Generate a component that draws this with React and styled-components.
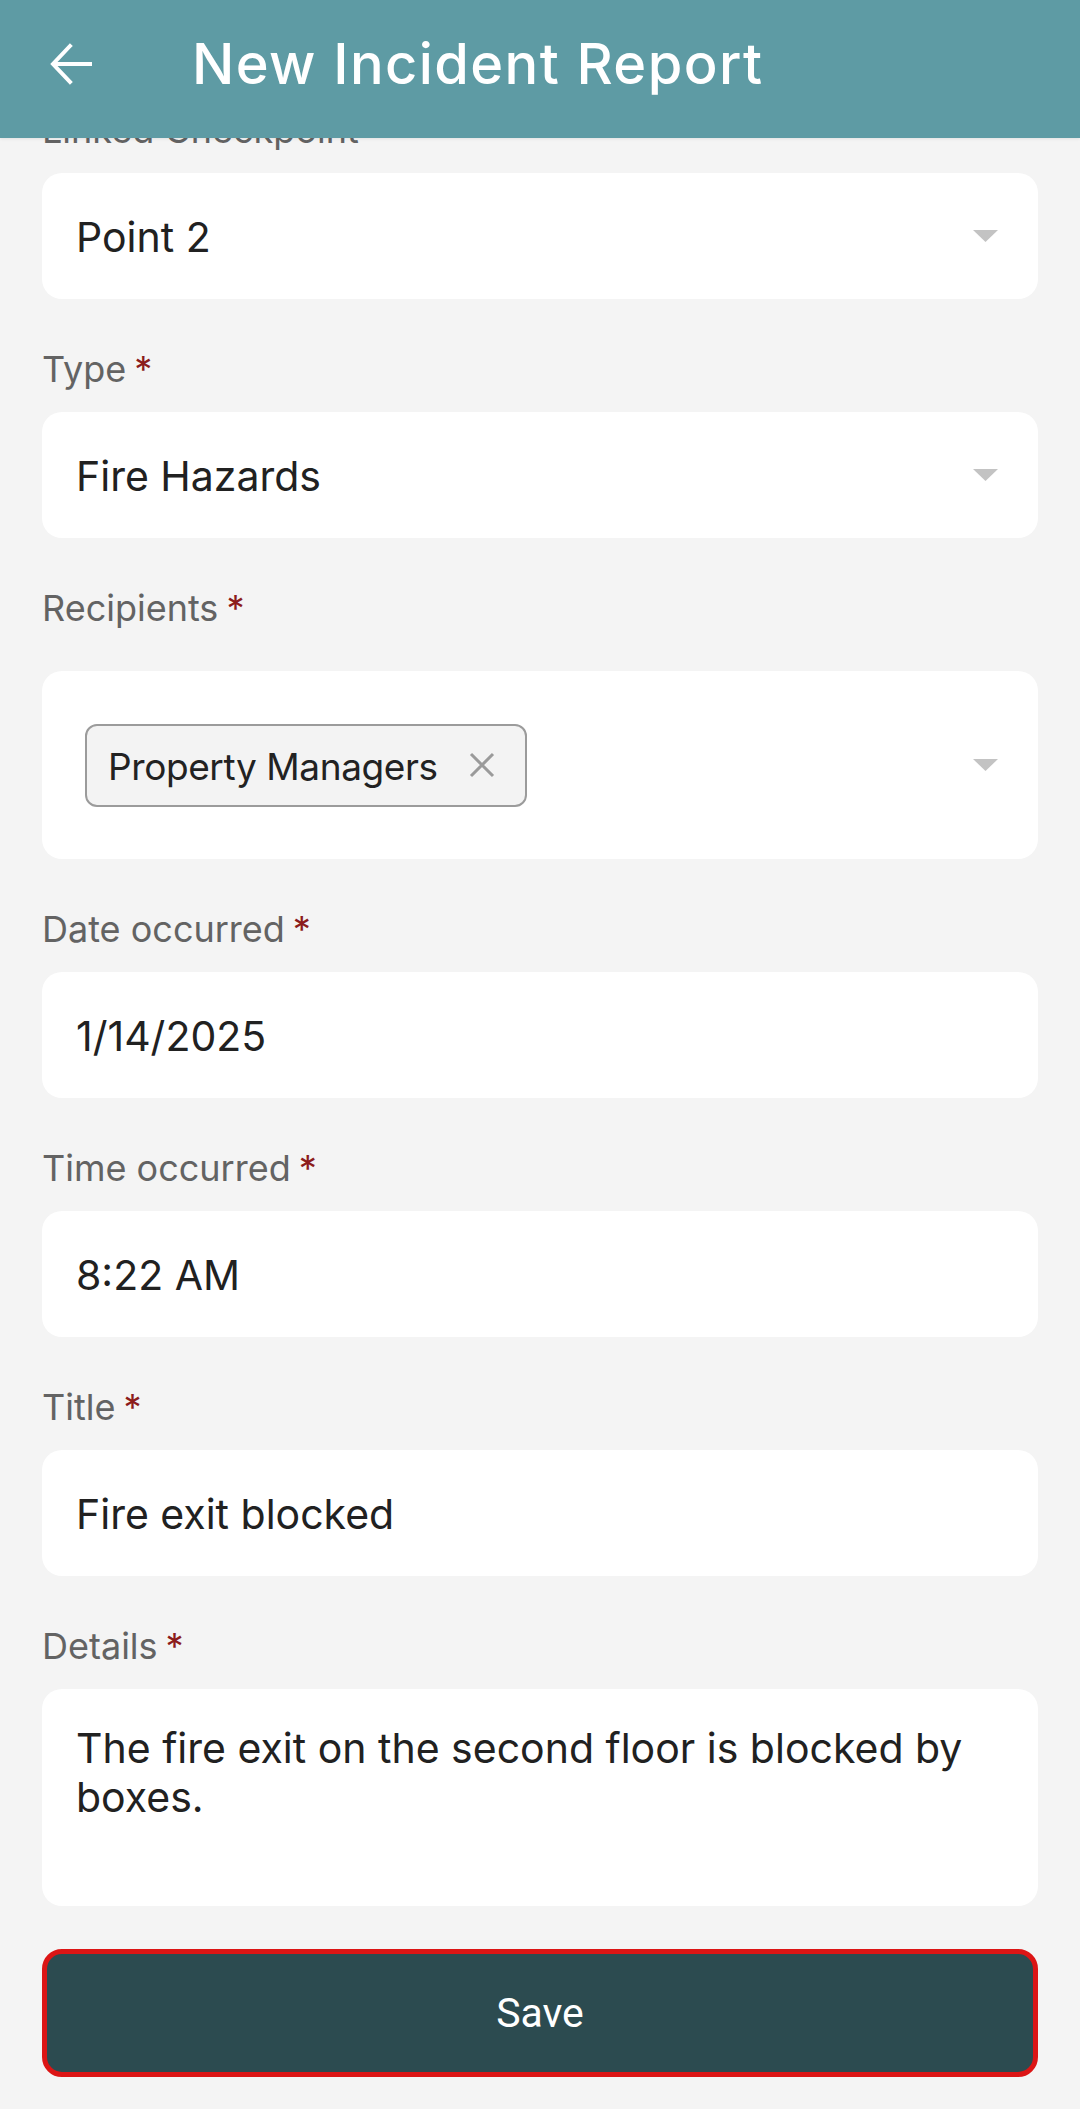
import React from "react";
import styled, { createGlobalStyle } from "styled-components";

const GlobalStyle = createGlobalStyle`
  html, body {
    margin: 0;
    padding: 0;
    background: #f4f4f4;
    font-family: Inter, "Noto Sans", sans-serif;
  }
  * { box-sizing: border-box; }
`;

const Header = styled.header`
  position: fixed;
  top: 0;
  left: 0;
  right: 0;
  height: 138px;
  background: #5e9ba4;
  display: flex;
  align-items: center;
  padding: 0 0 10px 50px;
  z-index: 10;
  box-shadow: 0 1px 3px rgba(0, 0, 0, 0.08);
`;

const BackButton = styled.button`
  width: 42px;
  height: 42px;
  padding: 0;
  border: none;
  background: transparent;
  display: flex;
  align-items: center;
  justify-content: center;
  cursor: pointer;
`;

const Title = styled.h1`
  margin: 0 0 0 100px;
  color: #ffffff;
  font-family: Inter, sans-serif;
  font-weight: 500;
  font-size: 56px;
  letter-spacing: 1.4px;
  line-height: 1;
`;

const Form = styled.form`
  display: flex;
  flex-direction: column;
  padding: 108px 42px 35px;
`;

const Group = styled.div`
  display: flex;
  flex-direction: column;
  margin-bottom: ${(p) => p.$after || 48}px;
`;

const Label = styled.label`
  font-size: 36px;
  line-height: 44px;
  color: #636363;
  margin-bottom: ${(p) => p.$gap || 21}px;
`;

const Required = styled.span`
  color: #8c1c1c;
  margin-left: 8px;
`;

const Box = styled.div`
  background: #ffffff;
  border-radius: 20px;
  height: ${(p) => p.$h || 126}px;
  display: flex;
  align-items: ${(p) => (p.$top ? "flex-start" : "center")};
  padding: ${(p) => (p.$top ? "35px 34px 0" : "0 40px 0 34px")};
`;

const Value = styled.span`
  flex: 1;
  font-size: 41px;
  line-height: 49px;
  color: #212121;
  padding-top: 3px;
`;

const Multiline = styled.div`
  font-size: 41px;
  line-height: 49px;
  color: #212121;
`;

const Caret = styled.svg`
  flex: none;
  width: 25px;
  height: 12px;
`;

const Chips = styled.div`
  flex: 1;
  display: flex;
  padding-left: 9px;
`;

const Chip = styled.div`
  height: 83px;
  display: flex;
  align-items: center;
  gap: 31px;
  padding: 0 30px 0 21px;
  border: 2.5px solid #9b9b9b;
  border-radius: 12px;
  background: #f3f3f3;
  font-size: 37px;
  letter-spacing: -0.4px;
  color: #222222;
`;

const ChipText = styled.span`
  padding-top: 3px;
`;

const SaveButton = styled.button`
  height: 128px;
  width: 100%;
  border: 5px solid #dc1515;
  border-radius: 20px;
  background: #2c4b50;
  color: #ffffff;
  font-family: Roboto, "Liberation Sans", sans-serif;
  font-size: 41px;
  cursor: pointer;
`;

const DropCaret = () => (
  <Caret viewBox="0 0 25 12">
    <path d="M0 0 H25 L12.5 12 Z" fill="#c3c3c3" />
  </Caret>
);

const Field = ({ label, after, gap, children }) => (
  <Group $after={after}>
    <Label $gap={gap}>
      {label}
      <Required>*</Required>
    </Label>
    {children}
  </Group>
);

export default function App() {
  return (
    <>
      <GlobalStyle />
      <Header>
        <BackButton aria-label="Back">
          <svg width="42" height="42" viewBox="0 0 42 42" fill="none">
            <path
              d="M40 21 H4 M20 3 L3 21 L20 39"
              stroke="#ffffff"
              strokeWidth="4"
              strokeLinecap="square"
            />
          </svg>
        </BackButton>
        <Title>New Incident Report</Title>
      </Header>
      <Form onSubmit={(e) => e.preventDefault()}>
        <Group>
          <Label>Linked Checkpoint</Label>
          <Box>
            <Value>Point 2</Value>
            <DropCaret />
          </Box>
        </Group>
        <Field label="Type">
          <Box>
            <Value>Fire Hazards</Value>
            <DropCaret />
          </Box>
        </Field>
        <Field label="Recipients" gap={41}>
          <Box $h={188}>
            <Chips>
              <Chip>
                <ChipText>Property Managers</ChipText>
                <svg width="26" height="26" viewBox="0 0 26 26">
                  <path
                    d="M2 2 L24 24 M24 2 L2 24"
                    stroke="#9a9a9a"
                    strokeWidth="3"
                  />
                </svg>
              </Chip>
            </Chips>
            <DropCaret />
          </Box>
        </Field>
        <Field label="Date occurred">
          <Box>
            <Value>1/14/2025</Value>
          </Box>
        </Field>
        <Field label="Time occurred">
          <Box>
            <Value>8:22 AM</Value>
          </Box>
        </Field>
        <Field label="Title">
          <Box>
            <Value>Fire exit blocked</Value>
          </Box>
        </Field>
        <Field label="Details" after={43}>
          <Box $h={217} $top>
            <Multiline>
              The fire exit on the second floor is blocked by boxes.
            </Multiline>
          </Box>
        </Field>
        <SaveButton type="submit">Save</SaveButton>
      </Form>
    </>
  );
}
